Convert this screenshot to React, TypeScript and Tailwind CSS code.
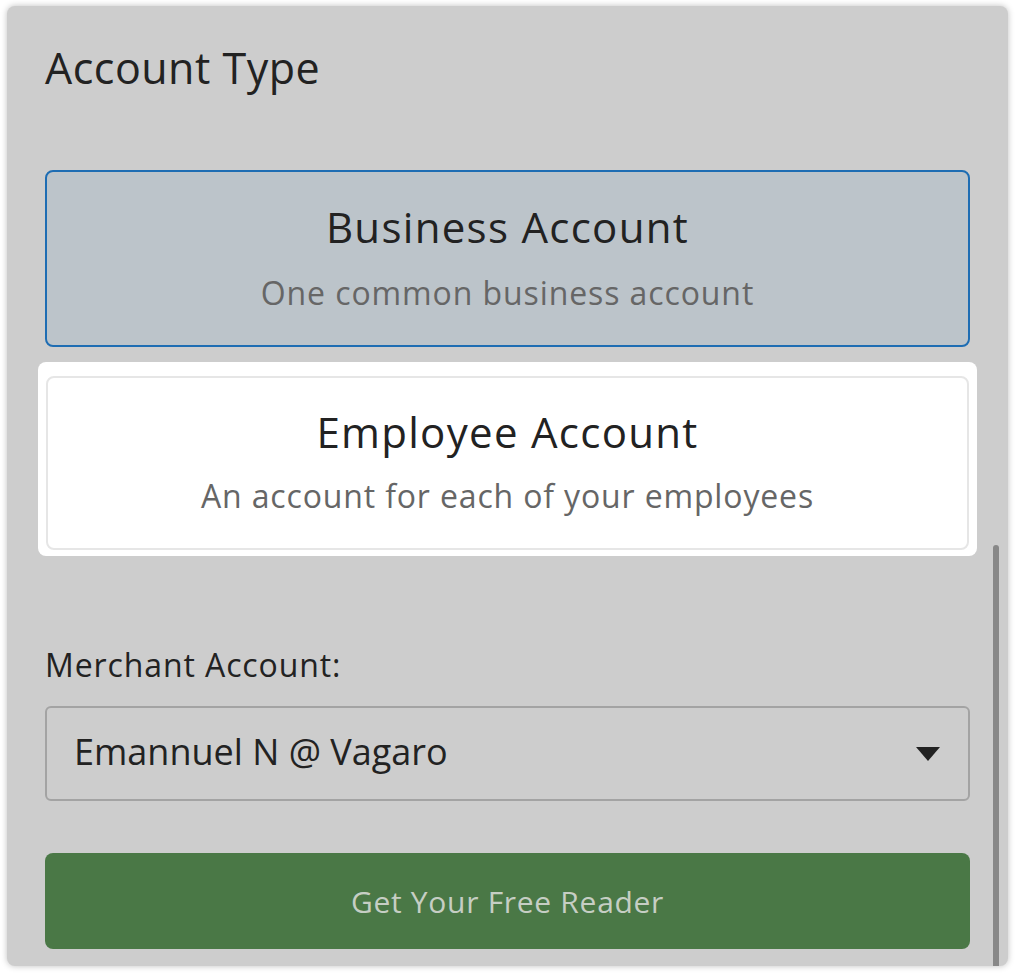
export default function App() {
  const font = { fontFamily: "'Open Sans', Lato, sans-serif" };

  return (
    <div className="min-h-[974px] bg-white p-[7px] pt-[6px]" style={font}>
      <div className="relative rounded-lg bg-[#cdcdcd] px-[38px] pb-[17px] pt-[37px] shadow-[0_0_6px_rgba(0,0,0,0.25)]">
        {/* scrollbar */}
        <div className="absolute right-[9px] top-[539px] bottom-0 w-[6px] rounded-t-full bg-[#888888]" />

        <h1 className="text-[43px] leading-[49px] tracking-[0.5px] text-[#222222]">Account Type</h1>

        {/* Business card (selected) */}
        <div className="mt-[78px] flex h-[177px] flex-col items-center rounded-lg border-2 border-[#1e6db3] bg-[#bcc4ca] pt-[31px]">
          <div className="text-[42px] leading-[48px] tracking-[1.3px] text-[#222222]">Business Account</div>
          <div className="mt-[24px] text-[32px] leading-[36px] tracking-[0.9px] text-[#666666]">One common business account</div>
        </div>

        {/* Employee card */}
        <div className="-mx-[7px] mt-[15px] rounded-lg bg-white px-[8px] pb-[6px] pt-[14px]">
          <div className="flex h-[174px] flex-col items-center rounded-lg border-2 border-[#e6e6e6] pt-[30px]">
            <div className="text-[42px] leading-[48px] tracking-[1.3px] text-[#222222]">Employee Account</div>
            <div className="mt-[22px] text-[32px] leading-[36px] tracking-[0.85px] text-[#666666]">An account for each of your employees</div>
          </div>
        </div>

        <div className="mt-[89px] text-[32px] leading-[40px] tracking-[0.9px] text-[#222222]">Merchant Account:</div>

        <div className="mt-[21px] flex h-[95px] items-center justify-between rounded-md border-2 border-[#a3a3a3] pl-[27px] pr-[27px]">
          <span className="-mt-[3px] text-[36px] text-[#222222]">Emannuel N @ Vagaro</span>
          <svg width="26" height="14" viewBox="0 0 26 14">
            <path d="M1 0 H25 L13 14 Z" fill="#222222" strokeLinejoin="round" />
          </svg>
        </div>

        <button className="mt-[52px] flex h-[96px] w-full items-center justify-center rounded-lg bg-[#4a7846] text-[30px] tracking-[0.7px] text-[#c6cec4]">
          Get Your Free Reader
        </button>
      </div>
    </div>
  );
}
